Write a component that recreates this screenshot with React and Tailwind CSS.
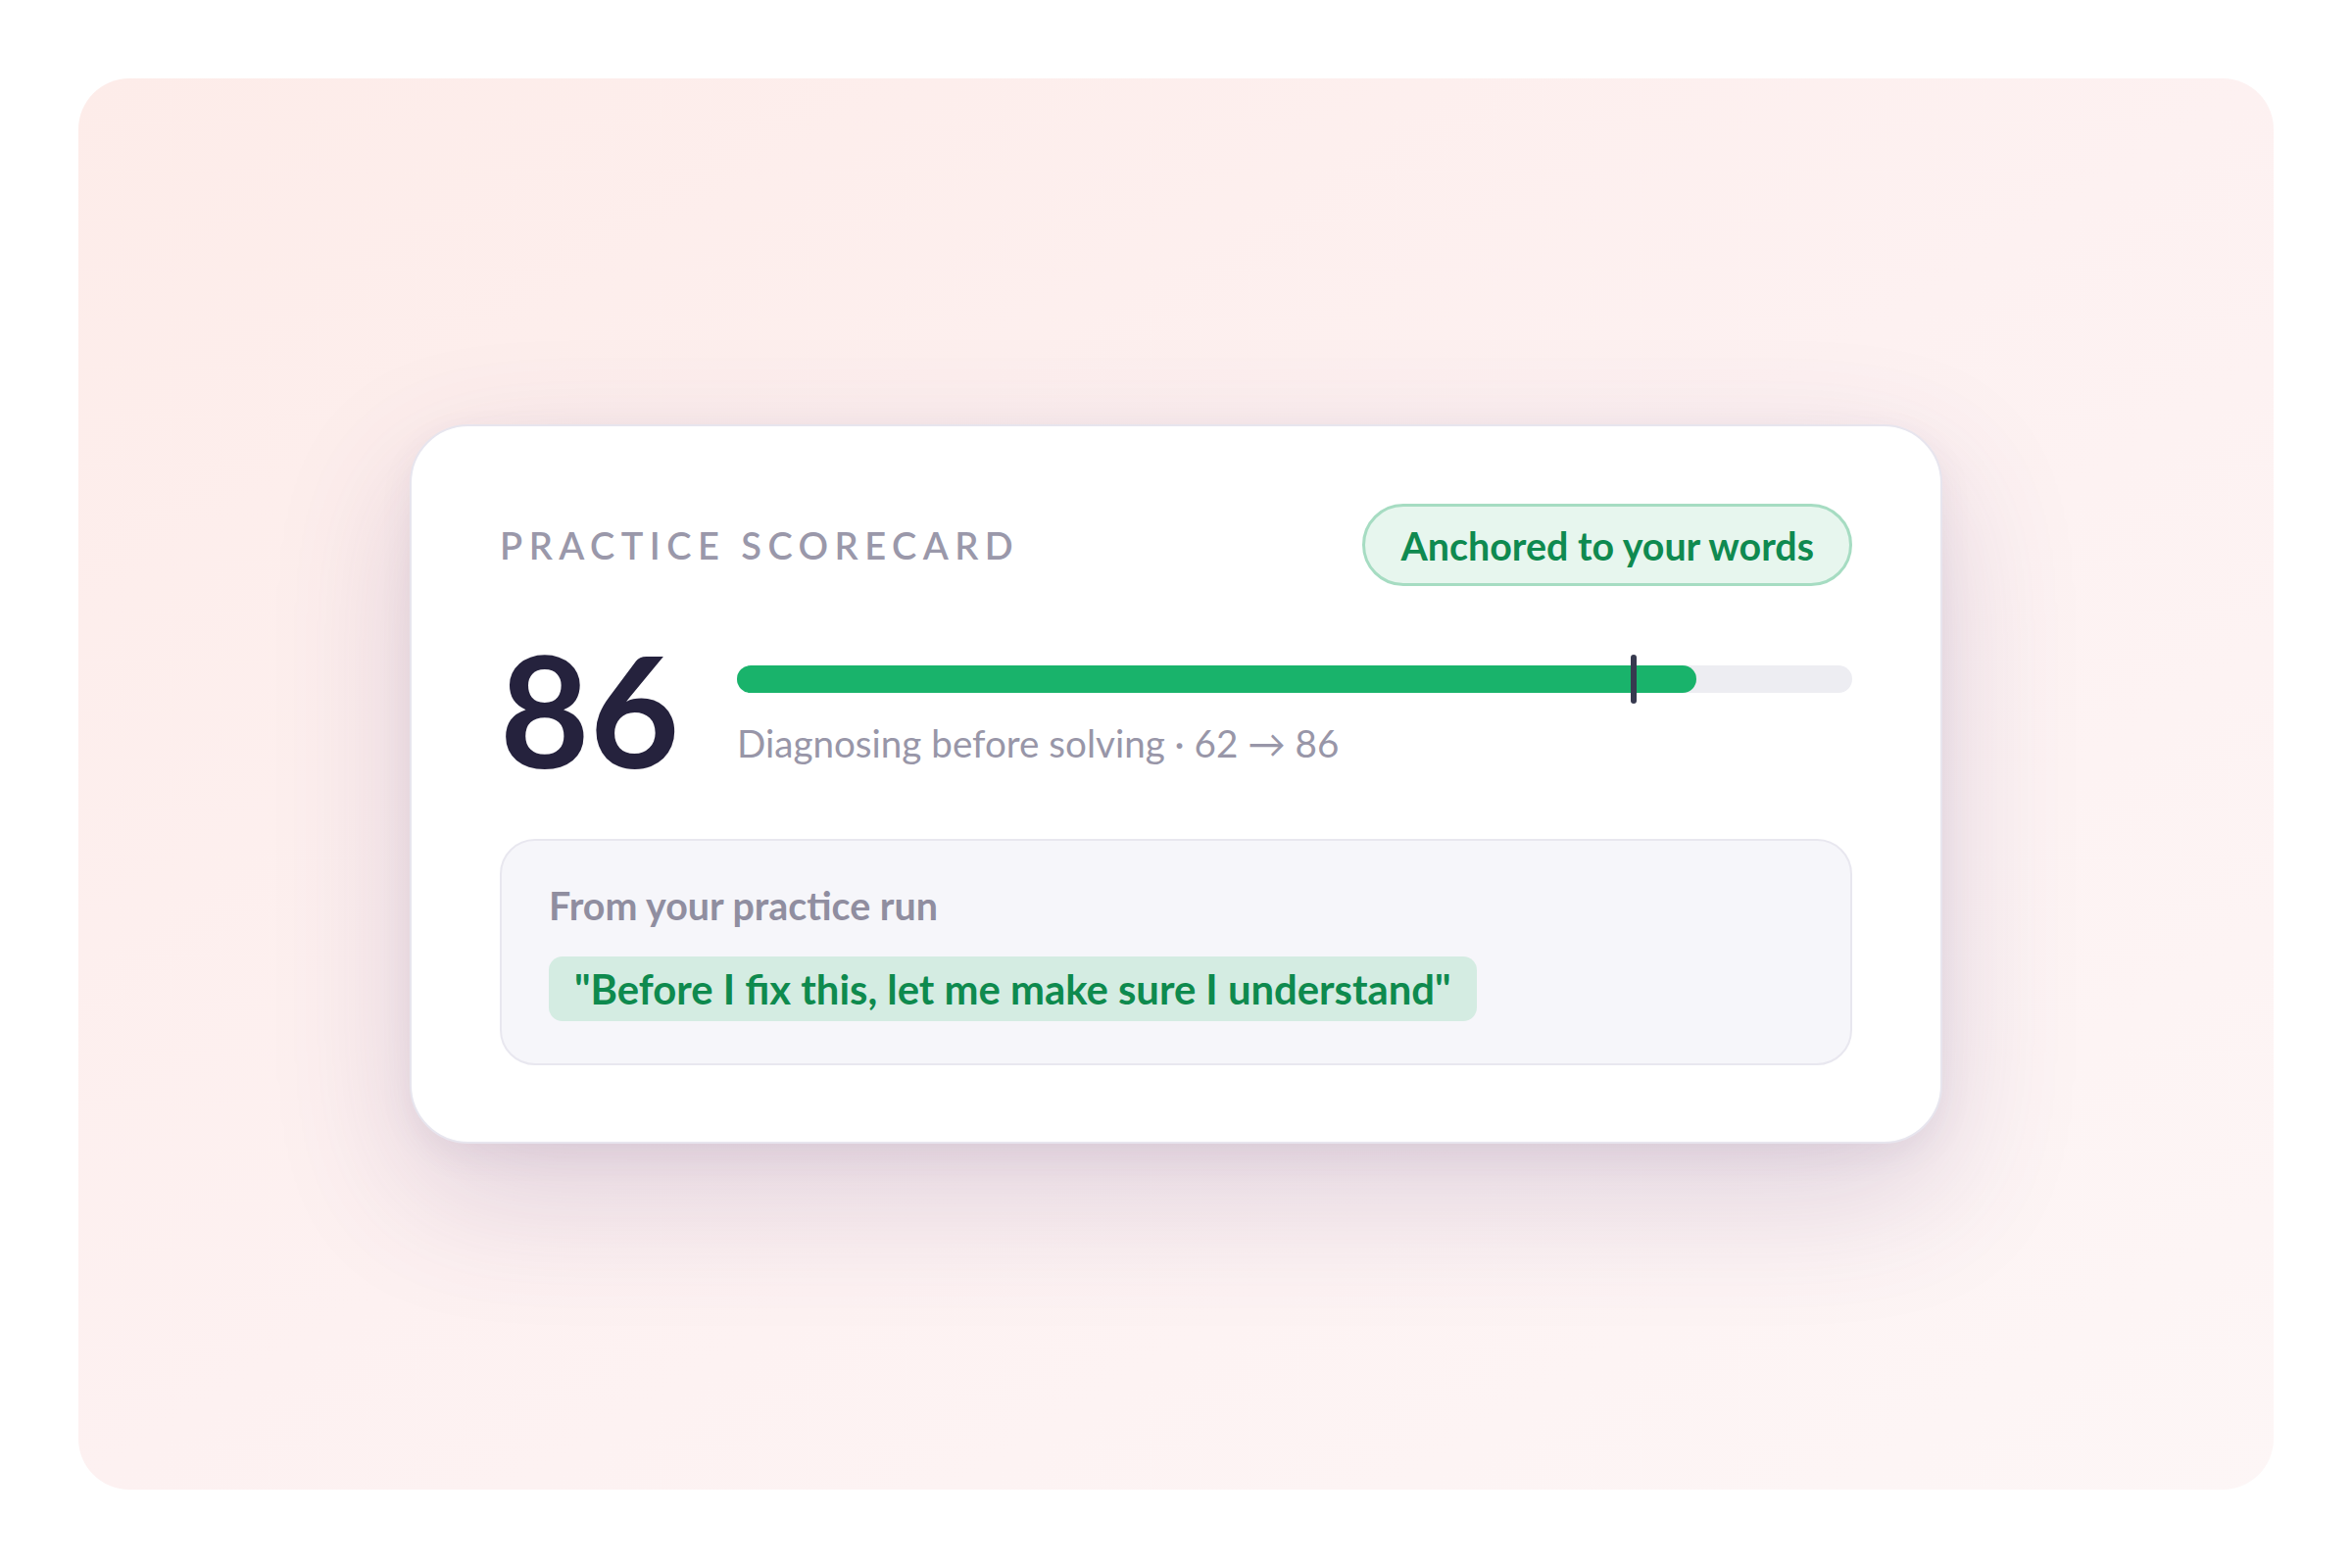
import React from "react";

const score = 86;
const target = 80.4;

export default function App() {
  return (
    <div className="min-h-screen w-full bg-white p-[80px] font-['Lato',sans-serif]">
      <div className="flex h-[1440px] items-center justify-center rounded-[52px] bg-gradient-to-br from-[#fdece9] via-[#fdf1f1] to-[#fdf6f6]">
        {/* scorecard */}
        <div className="w-[1564px] rounded-[60px] border-2 border-[#e7e5ee] bg-white px-[90px] pt-[79px] pb-[78px] shadow-[0_50px_140px_rgba(90,60,120,0.19),0_12px_34px_rgba(90,70,120,0.07)]">
          <div className="flex h-[84px] items-center justify-between">
            <span className="text-[38px] font-semibold tracking-[0.17em] text-[#9a98aa]">
              PRACTICE SCORECARD
            </span>
            <span className="flex h-[84px] items-center rounded-full border-[3px] border-[#a6dcc2] bg-[#e7f6ee] px-[36px] text-[39.4px] font-bold text-[#0f8a50]">
              Anchored to your words
            </span>
          </div>

          <div className="mt-[46px] flex items-start">
            <div className="w-[242px] text-[158px] font-bold leading-none text-[#25223d]">
              {score}
            </div>
            <div className="flex-1 pt-[35px]">
              <div className="relative h-[28px] rounded-full bg-[#ededf2]">
                <div
                  className="h-full rounded-full bg-[#19b36b]"
                  style={{ width: `${score}%` }}
                />
                <div
                  className="absolute top-[-11px] h-[50px] w-[6px] -translate-x-1/2 rounded-full bg-[#373a4f]"
                  style={{ left: `${target}%` }}
                />
              </div>
              <p className="mt-[28px] text-[38.6px] leading-[1.2] text-[#9896a8]">
                Diagnosing before solving · 62 → 86
              </p>
            </div>
          </div>

          <div className="mt-[54px] rounded-[36px] border-2 border-[#e8e7ef] bg-[#f6f6fa] px-[48px] pt-[42px] pb-[43px]">
            <p className="text-[39.4px] font-bold leading-[1.2] text-[#908ea0]">
              From your practice run
            </p>
            <div className="mt-[28px] flex">
              <span className="rounded-[14px] bg-[#d4ece2] px-[26px] py-[8px] text-[41.8px] font-bold leading-[1.2] text-[#0e8a4e]">
                "Before I fix this, let me make sure I understand"
              </span>
            </div>
          </div>
        </div>
      </div>
    </div>
  );
}
